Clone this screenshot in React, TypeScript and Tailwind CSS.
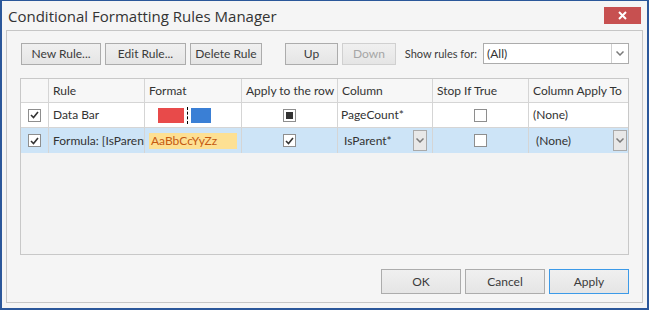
import React from "react";

const font = { fontFamily: 'Lato, "Open Sans", sans-serif' };
const titleFont = { fontFamily: '"Open Sans", "Noto Sans", sans-serif' };

function Btn({ children, w, disabled, primary }: { children: React.ReactNode; w: string; disabled?: boolean; primary?: boolean }) {
  return (
    <div
      className={`${w} flex items-center justify-center border bg-gradient-to-b from-[#f0f0f0] to-[#e5e5e5] text-[12px] ${
        primary ? "border-[#3c9ae8]" : disabled ? "border-[#d0d0d0]" : "border-[#acacac]"
      } ${disabled ? "text-[#a6a6a6]" : "text-[#3b3b3b]"}`}
    >
      {children}
    </div>
  );
}

function Check({ state }: { state: "on" | "off" | "mixed" }) {
  return (
    <div className="flex h-[13px] w-[13px] items-center justify-center border border-[#8e8e8e] bg-white">
      {state === "on" && (
        <svg width="9" height="8" viewBox="0 0 9 8">
          <path d="M1 4 L3.5 6.5 L8 1" fill="none" stroke="#333" strokeWidth="1.6" />
        </svg>
      )}
      {state === "mixed" && <div className="h-[7px] w-[7px] bg-[#333]" />}
    </div>
  );
}

function Chevron() {
  return (
    <svg width="8" height="5" viewBox="0 0 8 5">
      <path d="M0.5 0.5 L4 4 L7.5 0.5" fill="none" stroke="#7a7a7a" strokeWidth="1.5" />
    </svg>
  );
}

function DropBtn() {
  return (
    <div className="flex h-[21px] w-[14px] items-center justify-center border border-[#a9a9a9] bg-[#e8e8e8]">
      <Chevron />
    </div>
  );
}

const cols = "grid grid-cols-[28px_96px_97px_96px_95px_96px_99px]";
const cell = "border-r border-[#d5d5d5] flex items-center";

export default function App() {
  return (
    <div
      style={font}
      className="flex h-[310px] w-[649px] flex-col border-x-2 border-b-2 border-t border-[#2b579a] bg-[#f5f5f5] text-[#333]"
    >
      <div className="flex h-[29px] items-start justify-between">
        <div style={titleFont} className="pl-[6px] pt-[4px] text-[15px] text-[#333]">
          Conditional Formatting Rules Manager
        </div>
        <div className="mr-[6px] mt-[6px] flex h-[17px] w-[37px] items-center justify-center bg-[#c75050]">
          <svg width="9" height="9" viewBox="0 0 9 9">
            <path d="M1 1 L8 8 M8 1 L1 8" stroke="white" strokeWidth="2" />
          </svg>
        </div>
      </div>

      <div className="mx-[4px] mb-[5px] flex flex-1 flex-col border border-[#c6c6c6] px-[13px] pt-[12px]">
        <div className="flex h-[22px] items-stretch">
          <div className="ml-[1px] flex gap-[4px]">
            <Btn w="w-[80px]">New Rule...</Btn>
            <Btn w="w-[81px]">Edit Rule...</Btn>
            <Btn w="w-[72px]">Delete Rule</Btn>
          </div>
          <div className="ml-[23px] flex gap-[4px]">
            <Btn w="w-[53px]">Up</Btn>
            <Btn w="w-[54px]" disabled>Down</Btn>
          </div>
          <div className="ml-auto mr-[6px] flex items-center text-[11px] text-[#3b3b3b]">Show rules for:</div>
          <div className="flex h-[21px] w-[146px] items-stretch border border-[#acacac] bg-white">
            <div className="flex flex-1 items-center pl-[3px] text-[12px]">(All)</div>
            <div className="flex w-[17px] items-center justify-center border-l border-[#d0d0d0]">
              <Chevron />
            </div>
          </div>
        </div>

        <div className="mt-[13px] h-[177px] border border-[#c8c8c8] bg-[#f3f3f3] text-[12px]">
          <div className={`${cols} h-[24px] border-b border-[#d5d5d5] bg-[#f7f7f7]`}>
            <div className={cell} />
            <div className={`${cell} pl-[4px]`}>Rule</div>
            <div className={`${cell} pl-[4px]`}>Format</div>
            <div className={`${cell} pl-[4px]`}>Apply to the row</div>
            <div className={`${cell} pl-[4px]`}>Column</div>
            <div className={`${cell} pl-[4px]`}>Stop If True</div>
            <div className="flex items-center pl-[4px]">Column Apply To</div>
          </div>

          <div className={`${cols} h-[25px] border-b border-[#d5d5d5] bg-white`}>
            <div className={`${cell} justify-center`}>
              <Check state="on" />
            </div>
            <div className={`${cell} pl-[4px]`}>Data Bar</div>
            <div className={`${cell} pl-[13px]`}>
              <div className="h-[15px] w-[26px] bg-[#e84a4a]" />
              <div className="mx-[3px] h-[17px] border-l border-dashed border-black" />
              <div className="h-[15px] w-[20px] bg-[#3a7fd5]" />
            </div>
            <div className={`${cell} justify-center`}>
              <Check state="mixed" />
            </div>
            <div className={`${cell} pl-[3px]`}>PageCount*</div>
            <div className={`${cell} justify-center`}>
              <Check state="off" />
            </div>
            <div className="flex items-center pl-[4px]">(None)</div>
          </div>

          <div className={`${cols} h-[25px] bg-[#cde4f7]`}>
            <div className={`${cell} justify-center`}>
              <Check state="on" />
            </div>
            <div className={`${cell} overflow-hidden whitespace-nowrap pl-[4px]`}>Formula: [IsParent]</div>
            <div className={`${cell} pl-[4px]`}>
              <div className="flex h-[16px] w-[88px] items-center bg-[#fde093] pl-[2px] text-[#c55a11]">AaBbCcYyZz</div>
            </div>
            <div className={`${cell} justify-center`}>
              <Check state="on" />
            </div>
            <div className={`${cell} justify-between pl-[6px] pr-[5px]`}>
              <span>IsParent*</span>
              <DropBtn />
            </div>
            <div className={`${cell} justify-center`}>
              <Check state="off" />
            </div>
            <div className="flex items-center justify-between pl-[7px] pr-[1px]">
              <span>(None)</span>
              <DropBtn />
            </div>
          </div>
        </div>

        <div className="mt-[14px] flex h-[25px] justify-end gap-[4px]">
          <Btn w="w-[80px]">OK</Btn>
          <Btn w="w-[80px]">Cancel</Btn>
          <Btn w="w-[80px]" primary>Apply</Btn>
        </div>
      </div>
    </div>
  );
}
